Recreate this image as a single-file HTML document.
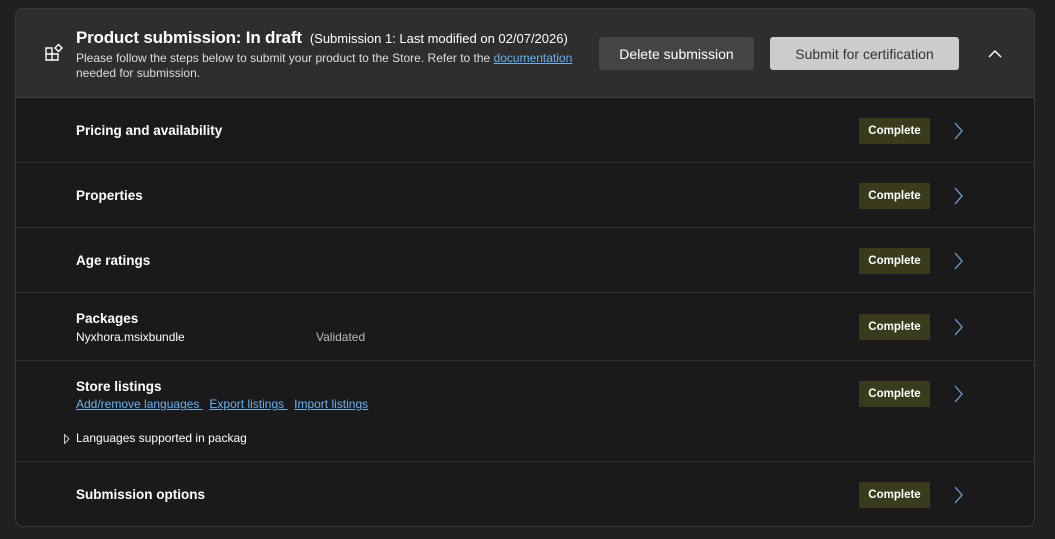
<!DOCTYPE html>
<html><head><style>
*{box-sizing:border-box;margin:0;padding:0}
body{width:1055px;height:539px;background:#202020;font-family:"Liberation Sans",sans-serif;color:#fff;position:relative;overflow:hidden}
.card{position:absolute;left:15px;top:8px;width:1020px;height:519px;border:1px solid #3a3a3a;border-radius:8px;background:#1a1a1a;overflow:hidden}
.hdr{position:absolute;left:0;top:0;width:100%;height:89px;background:#2e2e2e;border-bottom:1px solid #3d3d3d}
.t{position:absolute;left:60px;top:19px;font-size:17px;font-weight:bold;letter-spacing:-0.2px}
.t span{font-size:13px;font-weight:normal;margin-left:8px;letter-spacing:0}
.sub{position:absolute;left:60px;top:42px;font-size:12px;line-height:15px;color:#ddd;width:530px}
a{color:#6cb0f0;text-decoration:underline}
.btn{position:absolute;top:28px;height:33px;border-radius:3px;font-size:14px;display:flex;align-items:center;justify-content:center}
.row{position:absolute;left:0;width:100%;border-bottom:1px solid #303030}
.row .n{position:absolute;left:60px;font-size:13.5px;font-weight:bold}
.badge{position:absolute;left:843px;width:71px;height:26px;background:#3a3a1c;font-size:11.5px;font-weight:bold;display:flex;align-items:center;justify-content:center}
.chev{position:absolute;left:936px}
.small{position:absolute;font-size:12px}
</style></head><body>
<div class="card">
<div class="hdr">
<svg style="position:absolute;left:28px;top:34px" width="20" height="20" viewBox="0 0 20 20" fill="none" stroke="#fff" stroke-width="1.4"><path d="M2 5h6v6H2zM2 11v6h6v-6M8 17h6v-6H8"/><path d="M11 5l3.5-3.5L18 5l-3.5 3.5z"/></svg>
<div class="t">Product submission: In draft<span>(Submission 1: Last modified on 02/07/2026)</span></div>
<div class="sub">Please follow the steps below to submit your product to the Store. Refer to the <a>documentation</a><br>needed for submission.</div>
<div class="btn" style="left:583px;width:155px;background:#444;color:#fff">Delete submission</div>
<div class="btn" style="left:754px;width:189px;background:#cccccc;color:#333">Submit for certification</div>
<svg style="position:absolute;left:971px;top:39px" width="16" height="12" viewBox="0 0 16 12" fill="none" stroke="#fff" stroke-width="1.5"><path d="M2 9l6-6 6 6"/></svg>
</div>
<div class="row" style="top:89px;height:65px"><div class="n" style="top:25px">Pricing and availability</div><div class="badge" style="top:20px">Complete</div><svg class="chev" style="top:24px" width="12" height="18" viewBox="0 0 12 18" fill="none" stroke="#6ca0dc" stroke-width="1.3"><path d="M3 1l7 8-7 8"/></svg></div>
<div class="row" style="top:154px;height:65px"><div class="n" style="top:25px">Properties</div><div class="badge" style="top:20px">Complete</div><svg class="chev" style="top:24px" width="12" height="18" viewBox="0 0 12 18" fill="none" stroke="#6ca0dc" stroke-width="1.3"><path d="M3 1l7 8-7 8"/></svg></div>
<div class="row" style="top:219px;height:65px"><div class="n" style="top:25px">Age ratings</div><div class="badge" style="top:20px">Complete</div><svg class="chev" style="top:24px" width="12" height="18" viewBox="0 0 12 18" fill="none" stroke="#6ca0dc" stroke-width="1.3"><path d="M3 1l7 8-7 8"/></svg></div>
<div class="row" style="top:284px;height:68px"><div class="n" style="top:18px">Packages</div><div class="small" style="left:60px;top:37px">Nyxhora.msixbundle</div><div class="small" style="left:300px;top:37px;color:#bbb">Validated</div><div class="badge" style="top:21px">Complete</div><svg class="chev" style="top:25px" width="12" height="18" viewBox="0 0 12 18" fill="none" stroke="#6ca0dc" stroke-width="1.3"><path d="M3 1l7 8-7 8"/></svg></div>
<div class="row" style="top:352px;height:101px"><div class="n" style="top:18px">Store listings</div><div class="small" style="left:60px;top:36px"><a>Add/remove languages&nbsp;</a>&nbsp;&nbsp;<a>Export listings&nbsp;</a>&nbsp;&nbsp;<a>Import listings</a></div><svg style="position:absolute;left:48px;top:73px" width="6" height="10" viewBox="0 0 6 10" fill="none" stroke="#ccc" stroke-width="1"><path d="M0.5 0.5L5 5 0.5 9.5z"/></svg><div class="small" style="left:60px;top:70px">Languages supported in packag</div><div class="badge" style="top:20px">Complete</div><svg class="chev" style="top:24px" width="12" height="18" viewBox="0 0 12 18" fill="none" stroke="#6ca0dc" stroke-width="1.3"><path d="M3 1l7 8-7 8"/></svg></div>
<div class="row" style="top:453px;height:66px;border:none"><div class="n" style="top:25px">Submission options</div><div class="badge" style="top:20px">Complete</div><svg class="chev" style="top:24px" width="12" height="18" viewBox="0 0 12 18" fill="none" stroke="#6ca0dc" stroke-width="1.3"><path d="M3 1l7 8-7 8"/></svg></div>
</div>
</body></html>
